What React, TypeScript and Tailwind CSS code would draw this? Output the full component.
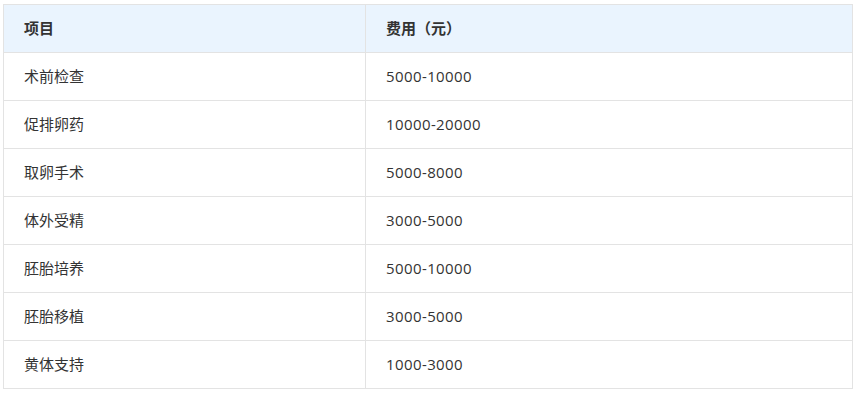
const rows: [string, string][] = [
  ["术前检查", "5000-10000"],
  ["促排卵药", "10000-20000"],
  ["取卵手术", "5000-8000"],
  ["体外受精", "3000-5000"],
  ["胚胎培养", "5000-10000"],
  ["胚胎移植", "3000-5000"],
  ["黄体支持", "1000-3000"],
];

export default function App() {
  return (
    <div className="pl-[3px] pt-[4px] bg-white min-h-screen" style={{ fontFamily: '"Open Sans", "Noto Sans CJK SC", sans-serif' }}>
      <table className="w-[850px] border-collapse border border-[#e3e3e3] text-[15px] leading-[22px] text-[#333]">
        <thead>
          <tr className="h-[48px] bg-[#eaf4fe]">
            <th className="w-[362px] border border-[#e3e3e3] px-5 pb-[2px] text-left font-bold">项目</th>
            <th className="border border-[#e3e3e3] px-5 pb-[2px] text-left font-bold">费用（元）</th>
          </tr>
        </thead>
        <tbody>
          {rows.map(([item, cost]) => (
            <tr key={item} className="h-[48px]">
              <td className="border border-[#e3e3e3] px-5 pb-[2px]">{item}</td>
              <td className="border border-[#e3e3e3] px-5 pb-[2px] tracking-[0.4px]">{cost}</td>
            </tr>
          ))}
        </tbody>
      </table>
    </div>
  );
}
